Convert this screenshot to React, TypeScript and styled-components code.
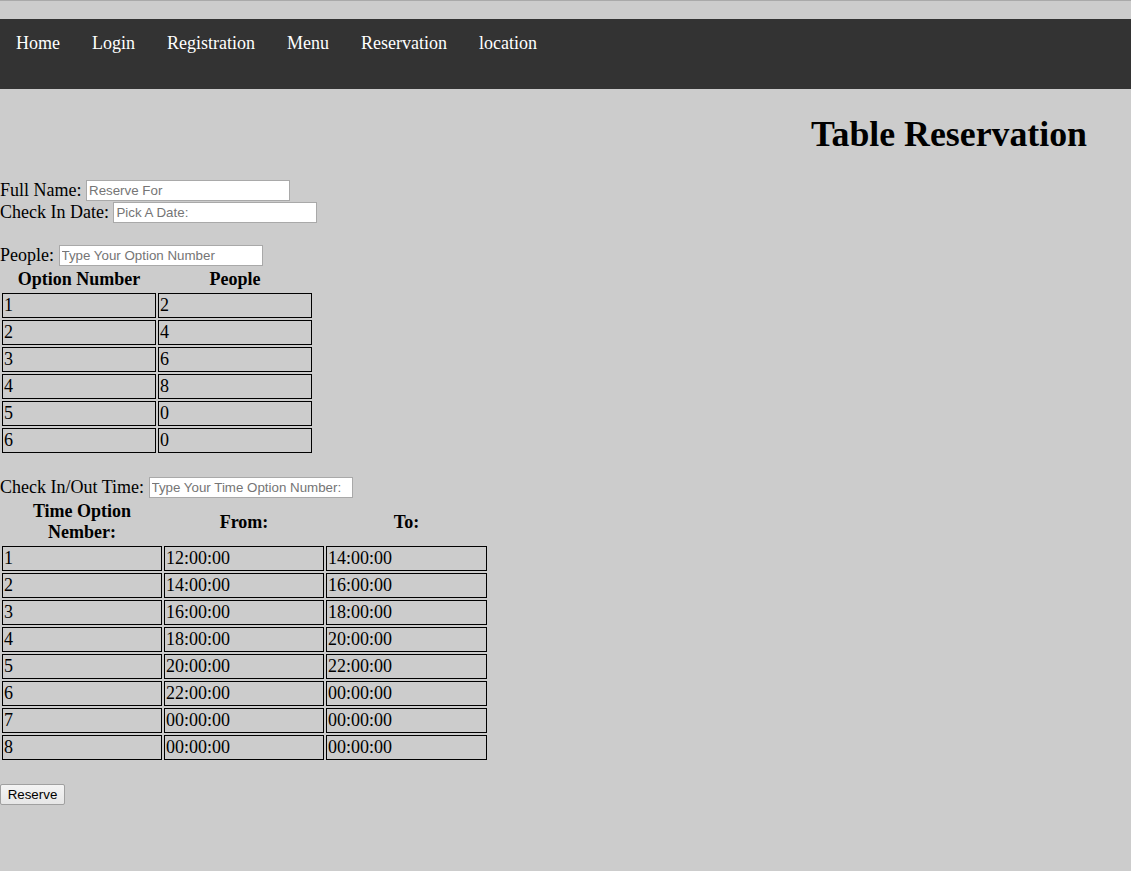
import React from "react";
import styled, { createGlobalStyle } from "styled-components";

const Global = createGlobalStyle`
  html, body { margin: 0; padding: 0; }
  body {
    background: #cccccc;
    font-family: "Liberation Serif", "Times New Roman", serif;
    font-size: 18px;
    color: #000;
    border-top: 1px solid #a9a9a9;
  }
`;

const Nav = styled.nav`
  margin-top: 18px;
  height: 70px;
  background: #333333;
  display: flex;
  align-items: flex-start;
`;

const NavLink = styled.a`
  color: #ffffff;
  text-decoration: none;
  font-size: 18px;
  line-height: 21px;
  padding: 14px 16px;
`;

const Title = styled.h1`
  margin: 25px 44px 0 0;
  text-align: right;
  font-size: 35.8px;
  line-height: 40px;
  font-weight: bold;
`;

const Form = styled.form`
  margin-top: 25px;
  display: flex;
  flex-direction: column;
  align-items: flex-start;
`;

const Row = styled.div`
  height: 22px;
  display: flex;
  align-items: center;
  line-height: 21px;
`;

const Label = styled.label`
  margin-right: 4.5px;
  white-space: nowrap;
`;

const Blank = styled.div<{ h: number }>`
  height: ${(p) => p.h}px;
`;

const Input = styled.input`
  box-sizing: border-box;
  width: 204px;
  height: 21px;
  border: 1px solid #a9a9a9;
  padding: 1px 2px;
  background: #fff;
  font-family: "Liberation Sans", Arial, sans-serif;
  font-size: 13.33px;
  outline: none;
  &::placeholder { color: #757575; }
`;

const Table = styled.table`
  border-collapse: separate;
  border-spacing: 2px;
`;

const Th = styled.th<{ w: number }>`
  width: ${(p) => p.w}px;
  box-sizing: border-box;
  padding: 1px;
  font-size: 18px;
  line-height: 21px;
  font-weight: bold;
  text-align: center;
  vertical-align: middle;
`;

const Td = styled.td<{ w: number }>`
  width: ${(p) => p.w}px;
  box-sizing: border-box;
  height: 25px;
  padding: 1px;
  border: 1px solid #000;
  font-size: 18px;
  line-height: 21px;
  text-align: left;
`;

const Button = styled.button`
  box-sizing: border-box;
  height: 21px;
  width: 65px;
  padding: 1px 6px;
  border: 1px solid #a0a0a0;
  border-radius: 2px;
  background: linear-gradient(#f4f4f4, #e6e6e6);
  font-family: "Liberation Sans", Arial, sans-serif;
  font-size: 13.33px;
  color: #000;
`;

const people = [
  ["1", "2"],
  ["2", "4"],
  ["3", "6"],
  ["4", "8"],
  ["5", "0"],
  ["6", "0"],
];

const times = [
  ["1", "12:00:00", "14:00:00"],
  ["2", "14:00:00", "16:00:00"],
  ["3", "16:00:00", "18:00:00"],
  ["4", "18:00:00", "20:00:00"],
  ["5", "20:00:00", "22:00:00"],
  ["6", "22:00:00", "00:00:00"],
  ["7", "00:00:00", "00:00:00"],
  ["8", "00:00:00", "00:00:00"],
];

export default function App() {
  return (
    <>
      <Global />
      <Nav>
        {["Home", "Login", "Registration", "Menu", "Reservation", "location"].map((l) => (
          <NavLink key={l} href="#">
            {l}
          </NavLink>
        ))}
      </Nav>
      <Title>Table Reservation</Title>
      <Form onSubmit={(e) => e.preventDefault()}>
        <Row>
          <Label>Full Name:</Label>
          <Input placeholder="Reserve For" />
        </Row>
        <Row>
          <Label>Check In Date:</Label>
          <Input placeholder="Pick A Date:" />
        </Row>
        <Blank h={21} />
        <Row>
          <Label>People:</Label>
          <Input placeholder="Type Your Option Number" />
        </Row>
        <Table>
          <thead>
            <tr>
              <Th w={154}>Option Number</Th>
              <Th w={154}>People</Th>
            </tr>
          </thead>
          <tbody>
            {people.map((r) => (
              <tr key={r[0]}>
                <Td w={154}>{r[0]}</Td>
                <Td w={154}>{r[1]}</Td>
              </tr>
            ))}
          </tbody>
        </Table>
        <Blank h={21} />
        <Row>
          <Label>Check In/Out Time:</Label>
          <Input placeholder="Type Your Time Option Number:" />
        </Row>
        <Table>
          <thead>
            <tr>
              <Th w={160}>
                Time Option
                <br />
                Nember:
              </Th>
              <Th w={160}>From:</Th>
              <Th w={161}>To:</Th>
            </tr>
          </thead>
          <tbody>
            {times.map((r) => (
              <tr key={r[0]}>
                <Td w={160}>{r[0]}</Td>
                <Td w={160}>{r[1]}</Td>
                <Td w={161}>{r[2]}</Td>
              </tr>
            ))}
          </tbody>
        </Table>
        <Blank h={22} />
        <Button type="submit">Reserve</Button>
      </Form>
    </>
  );
}
